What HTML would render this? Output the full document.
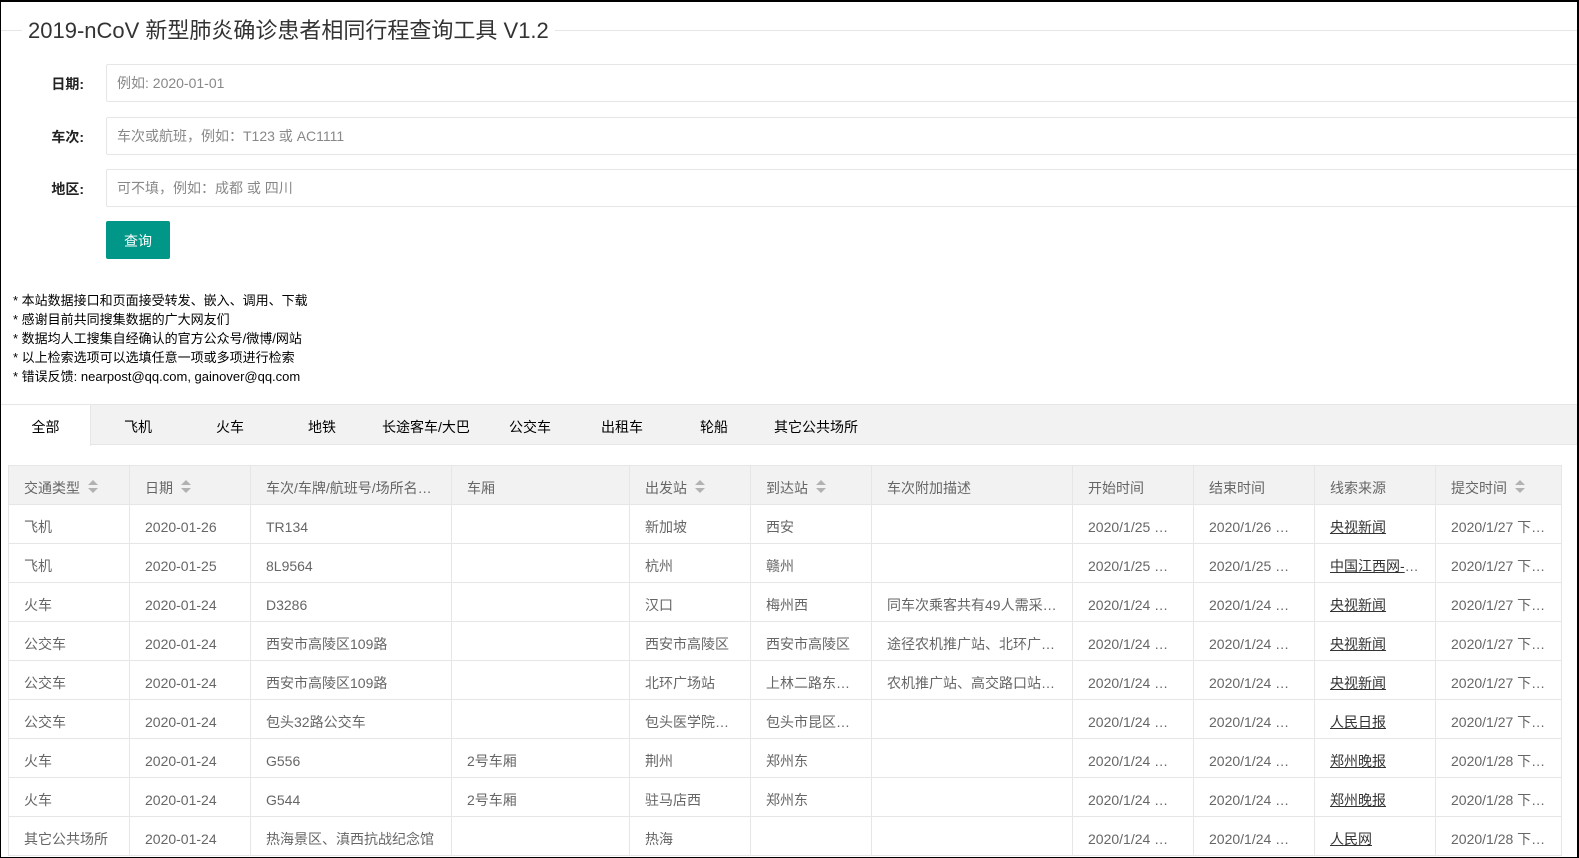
<!DOCTYPE html>
<html><head><meta charset="utf-8"><style>
*{box-sizing:border-box;margin:0;padding:0}
html,body{width:1579px;height:858px;overflow:hidden;background:#fff}
body{font-family:"Liberation Sans","Noto Sans CJK SC",sans-serif;color:#666;font-size:14px;position:relative}
.frame{position:absolute;left:0;top:0;width:1579px;height:858px;border:1px solid #000;border-right-width:2px;border-top-width:2px;pointer-events:none;z-index:9}
.line{position:absolute;left:0;right:0;top:30px;height:1px;background:#e6e6e6}
h1{position:absolute;left:22px;top:17px;padding:0 6px;background:#fff;font-weight:normal;font-size:22px;color:#333;line-height:28px}
.lbl{position:absolute;left:18px;width:66px;text-align:right;color:#222;font-size:14px;font-weight:bold}
.inp{position:absolute;left:106px;width:1480px;height:38px;border:1px solid #e6e6e6;border-radius:2px;padding-left:10px;line-height:36px;color:#888;font-size:14px}
.btn{position:absolute;left:106px;top:221px;width:64px;height:38px;background:#009688;color:#fff;border-radius:2px;text-align:center;line-height:40px;font-size:14px}
.notes{position:absolute;left:13px;top:291px;font-size:13px;line-height:19px;color:#000}
.tabs{position:absolute;left:1px;right:0;top:404px;height:41px;background:#f2f2f2;border-top:1px solid #e6e6e6;border-bottom:1px solid #e6e6e6}
.tab{position:absolute;top:0;height:40px;line-height:45px;font-size:14px;color:#000;text-align:center;width:120px;margin-left:-60px}
.tab.on{background:#fff;height:41px;border-right:1px solid #e6e6e6;width:90px;margin-left:0}
table{position:absolute;left:8px;top:465px;border-collapse:collapse;table-layout:fixed;width:1553px}
td,th{border:1px solid #e6e6e6;height:39px;padding:5px 15px 0;text-align:left;font-weight:normal;font-size:14px;color:#666;white-space:nowrap;overflow:hidden;text-overflow:ellipsis}
th{background:#f2f2f2}
.s{display:inline-block;margin-left:8px;vertical-align:middle;width:9px;height:13px;position:relative;top:-2px}
.s:before,.s:after{content:"";position:absolute;left:0;border-left:5px solid transparent;border-right:5px solid transparent}
.s:before{top:0;border-bottom:5px solid #b2b2b2}
.s:after{bottom:0;border-top:5px solid #b2b2b2}
a{color:#333;text-decoration:underline}
</style></head><body>
<div class="frame"></div>
<div class="line"></div>
<h1>2019-nCoV 新型肺炎确诊患者相同行程查询工具 V1.2</h1>
<div class="lbl" style="top:74px">日期:</div><div class="inp" style="top:64px">例如: 2020-01-01</div>
<div class="lbl" style="top:127px">车次:</div><div class="inp" style="top:117px">车次或航班，例如：T123 或 AC1111</div>
<div class="lbl" style="top:179px">地区:</div><div class="inp" style="top:169px">可不填，例如：成都 或 四川</div>
<div class="btn">查询</div>
<div class="notes">* 本站数据接口和页面接受转发、嵌入、调用、下载<br>* 感谢目前共同搜集数据的广大网友们<br>* 数据均人工搜集自经确认的官方公众号/微博/网站<br>* 以上检索选项可以选填任意一项或多项进行检索<br>* 错误反馈: nearpost@qq.com, gainover@qq.com</div>
<div class="tabs">
<div class="tab on" style="left:0">全部</div>
<div class="tab" style="left:137px">飞机</div>
<div class="tab" style="left:229px">火车</div>
<div class="tab" style="left:321px">地铁</div>
<div class="tab" style="left:425px">长途客车/大巴</div>
<div class="tab" style="left:529px">公交车</div>
<div class="tab" style="left:621px">出租车</div>
<div class="tab" style="left:713px">轮船</div>
<div class="tab" style="left:815px">其它公共场所</div>
</div>
<table>
<colgroup><col style="width:121px"><col style="width:121px"><col style="width:201px"><col style="width:178px"><col style="width:121px"><col style="width:121px"><col style="width:201px"><col style="width:121px"><col style="width:121px"><col style="width:121px"><col style="width:126px"></colgroup>
<tr><th>交通类型<span class="s"></span></th><th>日期<span class="s"></span></th><th>车次/车牌/航班号/场所名称说明</th><th>车厢</th><th>出发站<span class="s"></span></th><th>到达站<span class="s"></span></th><th>车次附加描述</th><th>开始时间</th><th>结束时间</th><th>线索来源</th><th>提交时间<span class="s"></span></th></tr>
<tr><td>飞机</td><td>2020-01-26</td><td>TR134</td><td></td><td>新加坡</td><td>西安</td><td></td><td>2020/1/25 上午12:00</td><td>2020/1/26 上午12:00</td><td><a>央视新闻</a></td><td>2020/1/27 下午3:00:00</td></tr>
<tr><td>飞机</td><td>2020-01-25</td><td>8L9564</td><td></td><td>杭州</td><td>赣州</td><td></td><td>2020/1/25 上午12:00</td><td>2020/1/25 上午12:00</td><td><a>中国江西网-赣南</a></td><td>2020/1/27 下午3:00:00</td></tr>
<tr><td>火车</td><td>2020-01-24</td><td>D3286</td><td></td><td>汉口</td><td>梅州西</td><td>同车次乘客共有49人需采取措施</td><td>2020/1/24 上午12:00</td><td>2020/1/24 上午12:00</td><td><a>央视新闻</a></td><td>2020/1/27 下午3:00:00</td></tr>
<tr><td>公交车</td><td>2020-01-24</td><td>西安市高陵区109路</td><td></td><td>西安市高陵区</td><td>西安市高陵区</td><td>途径农机推广站、北环广场站</td><td>2020/1/24 上午12:00</td><td>2020/1/24 上午12:00</td><td><a>央视新闻</a></td><td>2020/1/27 下午3:00:00</td></tr>
<tr><td>公交车</td><td>2020-01-24</td><td>西安市高陵区109路</td><td></td><td>北环广场站</td><td>上林二路东口站</td><td>农机推广站、高交路口站之间</td><td>2020/1/24 上午12:00</td><td>2020/1/24 上午12:00</td><td><a>央视新闻</a></td><td>2020/1/27 下午3:00:00</td></tr>
<tr><td>公交车</td><td>2020-01-24</td><td>包头32路公交车</td><td></td><td>包头医学院一附院</td><td>包头市昆区站点</td><td></td><td>2020/1/24 上午12:00</td><td>2020/1/24 上午12:00</td><td><a>人民日报</a></td><td>2020/1/27 下午3:00:00</td></tr>
<tr><td>火车</td><td>2020-01-24</td><td>G556</td><td>2号车厢</td><td>荆州</td><td>郑州东</td><td></td><td>2020/1/24 上午12:00</td><td>2020/1/24 上午12:00</td><td><a>郑州晚报</a></td><td>2020/1/28 下午3:00:00</td></tr>
<tr><td>火车</td><td>2020-01-24</td><td>G544</td><td>2号车厢</td><td>驻马店西</td><td>郑州东</td><td></td><td>2020/1/24 上午12:00</td><td>2020/1/24 上午12:00</td><td><a>郑州晚报</a></td><td>2020/1/28 下午3:00:00</td></tr>
<tr><td>其它公共场所</td><td>2020-01-24</td><td>热海景区、滇西抗战纪念馆</td><td></td><td>热海</td><td></td><td></td><td>2020/1/24 上午12:00</td><td>2020/1/24 上午12:00</td><td><a>人民网</a></td><td>2020/1/28 下午3:00:00</td></tr>
</table>
</body></html>
